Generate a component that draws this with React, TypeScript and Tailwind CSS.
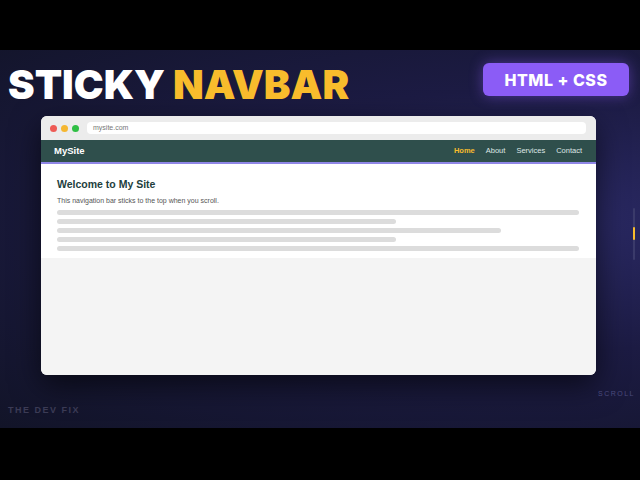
import React from "react";

export default function App() {
  const bars = ["w-full", "w-[65%]", "w-[85%]", "w-[65%]", "w-full"];
  return (
    <div className="w-[640px] h-[480px] bg-black flex flex-col" style={{ fontFamily: "'Liberation Sans', Arial, sans-serif" }}>
      <div className="h-[50px] shrink-0" />
      <div className="relative h-[378px] shrink-0 overflow-hidden bg-[radial-gradient(ellipse_at_85%_45%,#2b2a66_0%,#1c1b43_45%,#121428_100%)]">
        <div className="flex items-start justify-between pl-[8px] pr-[11px] pt-[13px]">
          <div className="text-[40px] leading-[44px] font-black tracking-[0px]" style={{ fontFamily: "Inter, 'Liberation Sans', sans-serif" }}>
            <span className="text-white">STICKY </span>
            <span className="text-[#f8bc2c]">NAVBAR</span>
          </div>
          <div className="h-[33px] w-[146px] rounded-[6px] bg-[#8b5cf6] flex items-center justify-center text-white font-extrabold text-[16px] tracking-[0.5px] shadow-[0_0_14px_rgba(139,92,246,0.45)]" style={{ fontFamily: "Inter, 'Liberation Sans', sans-serif" }}>
            HTML + CSS
          </div>
        </div>

        <div className="ml-[41px] mt-[9px] w-[555px] h-[259px] rounded-[6px] overflow-hidden bg-[#f4f4f4] flex flex-col shadow-[0_10px_30px_rgba(0,0,0,0.6)]">
          <div className="h-[24px] bg-[#ececec] flex items-center pl-[9px] pr-[10px] gap-[4px] shrink-0">
            <span className="w-[7px] h-[7px] rounded-full bg-[#ee5b55]" />
            <span className="w-[7px] h-[7px] rounded-full bg-[#f5b731]" />
            <span className="w-[7px] h-[7px] rounded-full bg-[#2fbf44]" />
            <div className="ml-[4px] flex-1 h-[12px] rounded-[4px] bg-white flex items-center pl-[6px] text-[7px] text-[#777]">mysite.com</div>
          </div>
          <div className="h-[24px] bg-[#2f4f4c] border-b-[2px] border-[#8f86e6] flex items-center justify-between pl-[13px] pr-[14px] shrink-0">
            <span className="text-white font-bold text-[9.5px]">MySite</span>
            <div className="flex gap-[11px] text-[7.5px] text-[#dfe7e6]">
              <span className="text-[#f8bc2c] font-bold">Home</span>
              <span>About</span>
              <span>Services</span>
              <span>Contact</span>
            </div>
          </div>
          <div className="bg-white pl-[16px] pr-[17px] pt-[13px] pb-[7px] shrink-0">
            <div className="text-[10.5px] font-bold text-[#22403d] leading-[14px]">Welcome to My Site</div>
            <div className="mt-[5px] text-[7px] text-[#555] leading-[9px]">This navigation bar sticks to the top when you scroll.</div>
            <div className="mt-[5px] flex flex-col gap-[4px]">
              {bars.map((w, i) => (
                <div key={i} className={`${w} h-[5px] rounded-full bg-[#dcdcdc]`} />
              ))}
            </div>
          </div>
          <div className="flex-1 bg-[#f4f4f4]" />
        </div>

        <div className="absolute left-[8px] top-[354px] text-[9px] font-bold tracking-[1.5px] text-[#3b3b55]">THE DEV FIX</div>
        <div className="absolute right-[5px] top-[339px] text-[7px] tracking-[1.5px] text-[#4a4a7c]">SCROLL</div>
        <div className="absolute left-[633px] top-[158px] w-[2px] h-[52px] bg-[#3a3a6a] rounded-full" />
        <div className="absolute left-[633px] top-[177px] w-[2px] h-[13px] bg-[#f8bc2c] rounded-full" />
      </div>
      <div className="flex-1" />
    </div>
  );
}
